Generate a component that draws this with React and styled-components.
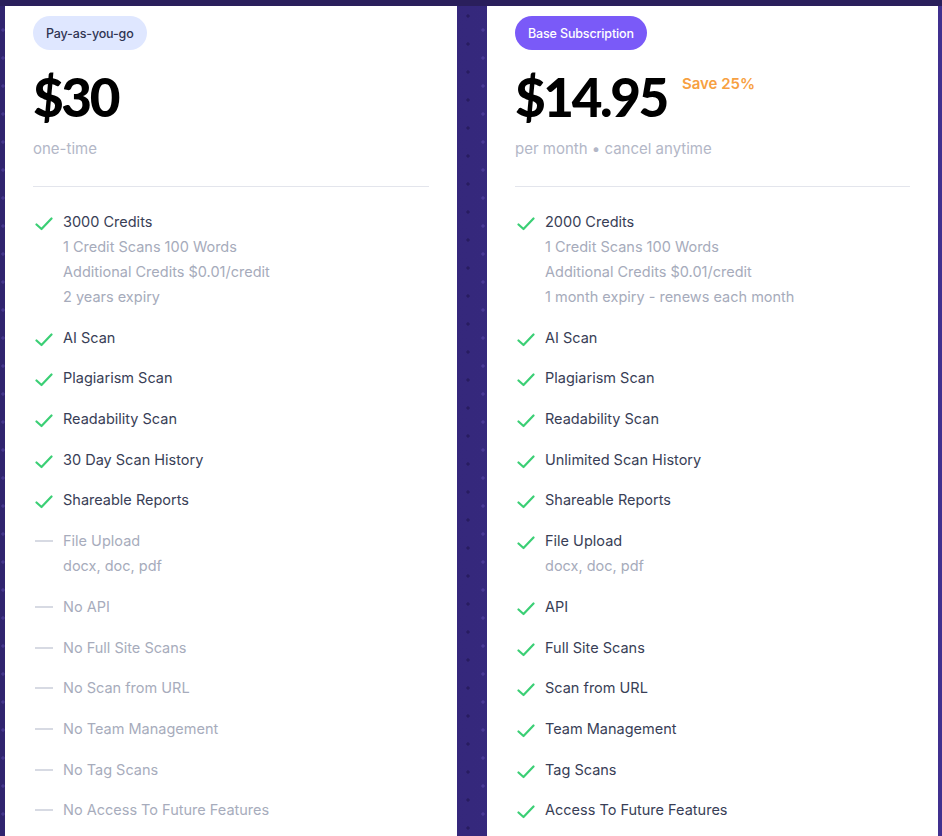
import React from "react";
import styled, { createGlobalStyle } from "styled-components";

const Global = createGlobalStyle`
  html, body { margin: 0; padding: 0; height: 100%; overflow: hidden; }
  body {
    font-family: "Inter", "Liberation Sans", sans-serif;
    background-color: #35287c;
    background-image:
      radial-gradient(circle at 50% 50%, rgba(24,14,64,0.45) 0 1.3px, transparent 2px),
      radial-gradient(circle at 50% 50%, rgba(110,90,200,0.35) 0 1.3px, transparent 2px),
      linear-gradient(90deg, #30246f 0%, #35287c 50%, #40308f 100%);
    background-size: 30px 28px, 30px 28px, 100% 100%;
    background-position: 3px 2px, 18px 16px, 0 0;
  }
`;

const Page = styled.div`
  display: grid;
  grid-template-columns: 452px 451px;
  column-gap: 30px;
  padding: 6px 0 0 5px;
  background: linear-gradient(#2a1f5c, #2a1f5c) top / 100% 6px no-repeat;
  height: 836px;
  box-sizing: border-box;
`;

const Card = styled.div`
  background: #ffffff;
  padding: 10px 28px 0 28px;
  height: 900px;
`;

const Pill = styled.div`
  display: inline-flex;
  align-items: center;
  height: 34px;
  padding: 0 13px;
  border-radius: 17px;
  font-size: 12.5px;
  font-weight: 500;
  letter-spacing: -0.15px;
  background: ${(p) => (p.$primary ? "#7a5af8" : "#dfe7ff")};
  color: ${(p) => (p.$primary ? "#ffffff" : "#2f3452")};
`;

const PriceRow = styled.div`
  display: flex;
  align-items: flex-start;
  gap: 15px;
  margin-top: 18px;
  height: 58px;
`;

const Price = styled.div`
  font-family: "Lato", "Inter", sans-serif;
  font-weight: 900;
  font-size: 53px;
  line-height: 58px;
  letter-spacing: -2.4px;
  color: #000000;
`;

const Save = styled.div`
  font-size: 15px;
  font-weight: 600;
  color: #f7a041;
  margin-top: 6px;
`;

const Term = styled.div`
  margin-top: 12px;
  font-size: 15px;
  color: #b3b7c7;
  line-height: 22px;
`;

const Divider = styled.hr`
  border: none;
  border-top: 1px solid #e3e5ec;
  margin: 26px 0 22px 0;
`;

const List = styled.ul`
  list-style: none;
  margin: 0;
  padding: 0;
  display: flex;
  flex-direction: column;
  gap: 15.7px;
`;

const Item = styled.li`
  display: grid;
  grid-template-columns: 30px 1fr;
  font-size: 14.5px;
  line-height: 25px;
`;

const IconCell = styled.div`
  box-sizing: border-box;
  height: 25px;
  display: flex;
  align-items: center;
  padding-left: 2px;
  padding-top: 5px;
`;

const Dash = styled.span`
  display: block;
  width: 18px;
  height: 2px;
  background: #d7dae3;
  margin-top: -4px;
`;

const Lines = styled.div`
  display: flex;
  flex-direction: column;
`;

const Main = styled.span`
  color: ${(p) => (p.$off ? "#a7acbc" : "#383e56")};
`;

const Sub = styled.span`
  color: #a6abbb;
`;

const Check = () => (
  <svg width="18" height="14" viewBox="0 0 18 14" fill="none">
    <path d="M1.5 7.5 L6.5 12 L16.5 1.5" stroke="#3bcf75" strokeWidth="2.2" strokeLinecap="round" strokeLinejoin="round" />
  </svg>
);

const Feature = ({ on, title, subs = [] }) => (
  <Item>
    <IconCell>{on ? <Check /> : <Dash />}</IconCell>
    <Lines>
      <Main $off={!on}>{title}</Main>
      {subs.map((s) => (
        <Sub key={s}>{s}</Sub>
      ))}
    </Lines>
  </Item>
);

const left = [
  { on: true, title: "3000 Credits", subs: ["1 Credit Scans 100 Words", "Additional Credits $0.01/credit", "2 years expiry"] },
  { on: true, title: "AI Scan" },
  { on: true, title: "Plagiarism Scan" },
  { on: true, title: "Readability Scan" },
  { on: true, title: "30 Day Scan History" },
  { on: true, title: "Shareable Reports" },
  { on: false, title: "File Upload", subs: ["docx, doc, pdf"] },
  { on: false, title: "No API" },
  { on: false, title: "No Full Site Scans" },
  { on: false, title: "No Scan from URL" },
  { on: false, title: "No Team Management" },
  { on: false, title: "No Tag Scans" },
  { on: false, title: "No Access To Future Features" },
];

const right = [
  { on: true, title: "2000 Credits", subs: ["1 Credit Scans 100 Words", "Additional Credits $0.01/credit", "1 month expiry - renews each month"] },
  { on: true, title: "AI Scan" },
  { on: true, title: "Plagiarism Scan" },
  { on: true, title: "Readability Scan" },
  { on: true, title: "Unlimited Scan History" },
  { on: true, title: "Shareable Reports" },
  { on: true, title: "File Upload", subs: ["docx, doc, pdf"] },
  { on: true, title: "API" },
  { on: true, title: "Full Site Scans" },
  { on: true, title: "Scan from URL" },
  { on: true, title: "Team Management" },
  { on: true, title: "Tag Scans" },
  { on: true, title: "Access To Future Features" },
];

const Plan = ({ label, primary, price, save, term, features }) => (
  <Card>
    <Pill $primary={primary}>{label}</Pill>
    <PriceRow>
      <Price>{price}</Price>
      {save && <Save>{save}</Save>}
    </PriceRow>
    <Term>{term}</Term>
    <Divider />
    <List>
      {features.map((f) => (
        <Feature key={f.title} {...f} />
      ))}
    </List>
  </Card>
);

export default function App() {
  return (
    <>
      <Global />
      <Page>
        <Plan label="Pay-as-you-go" price="$30" term="one-time" features={left} />
        <Plan
          label="Base Subscription"
          primary
          price="$14.95"
          save="Save 25%"
          term="per month • cancel anytime"
          features={right}
        />
      </Page>
    </>
  );
}
